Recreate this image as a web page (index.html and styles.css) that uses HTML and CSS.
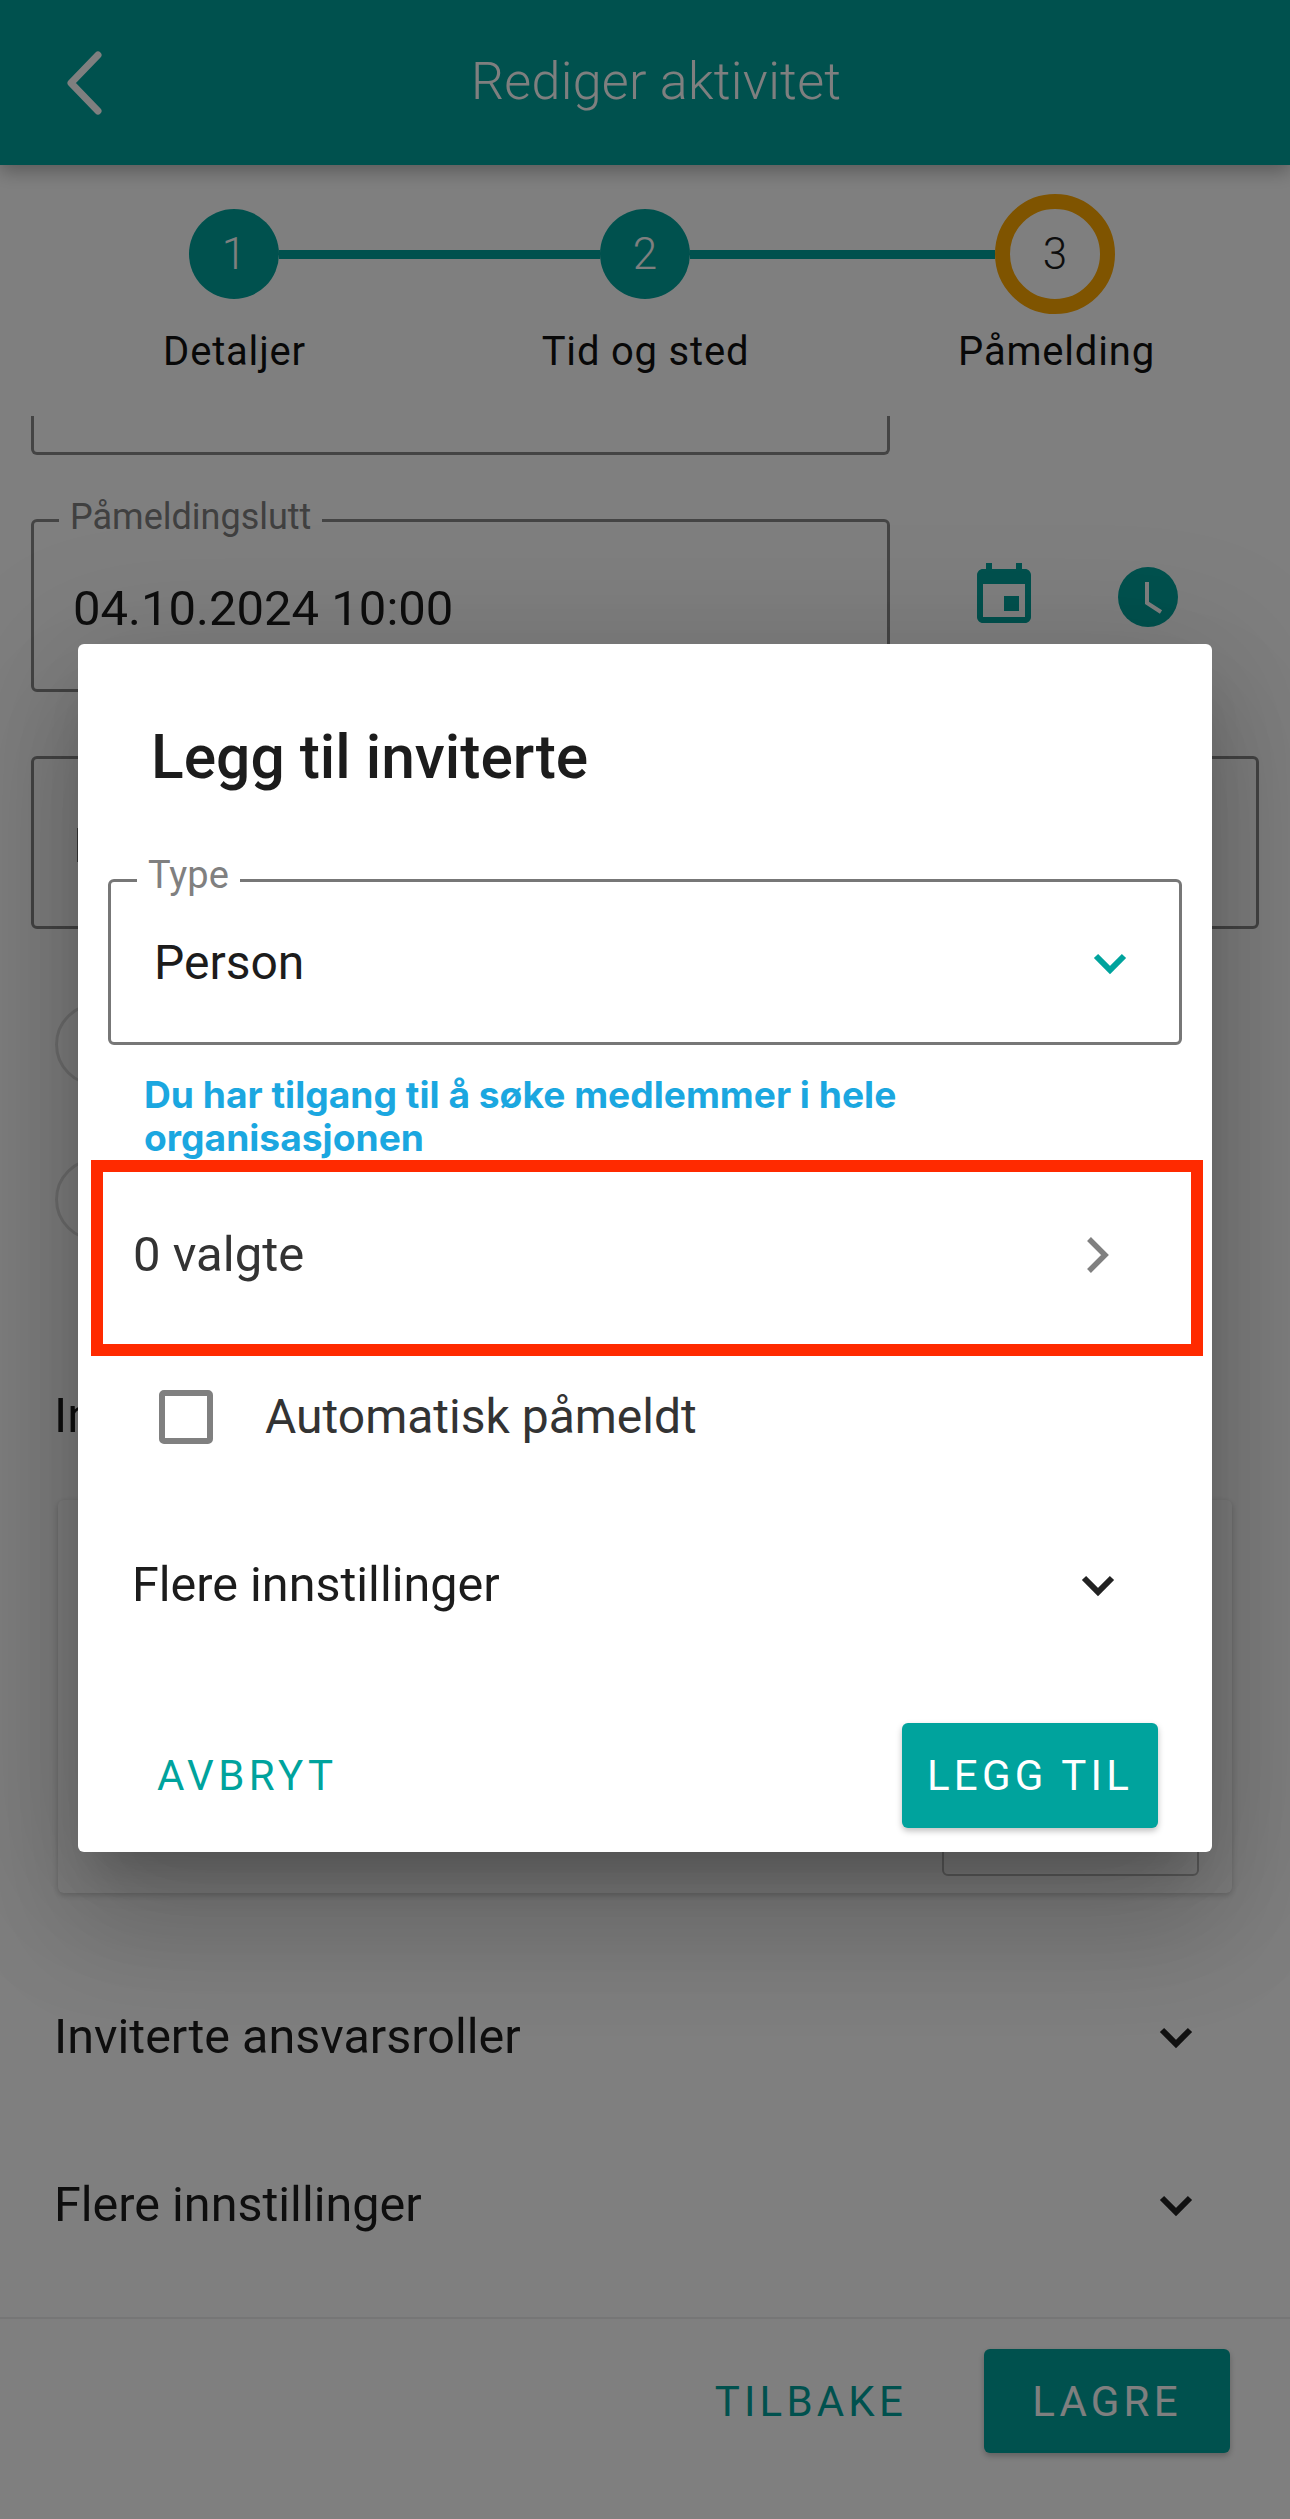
FILE: index.html
```html
<!DOCTYPE html>
<html lang="no">
<head>
<meta charset="utf-8">
<title>Rediger aktivitet</title>
<link rel="stylesheet" href="styles.css">
</head>
<body>
<div class="page">
  <header class="topbar">
    <svg class="back" width="44" height="72" viewBox="0 0 44 72"><polyline points="36,8 9,36 36,64"/></svg>
    <h1 class="topbar-title">Rediger aktivitet</h1>
  </header>

  <section class="stepper">
    <div class="track">
      <span class="dot">1</span><span class="link link-a"></span>
      <span class="dot">2</span><span class="link link-b"></span>
      <span class="dot dot-active">3</span>
    </div>
    <div class="labels">
      <span>Detaljer</span><span>Tid og sted</span><span>Påmelding</span>
    </div>
  </section>

  <main class="content">
    <div class="field-cut"></div>
    <div class="date-row">
      <div class="field field-date">
        <span class="legend">Påmeldingslutt</span>
        <span class="value">04.10.2024 10:00</span>
      </div>
      <svg class="ico-cal" width="72" height="72" viewBox="0 0 24 24"><path d="M17 12h-5v5h5v-5zM16 1v2H8V1H6v2H5c-1.11 0-1.99.9-1.99 2L3 19c0 1.1.89 2 2 2h14c1.1 0 2-.9 2-2V5c0-1.1-.9-2-2-2h-1V1h-2zm3 18H5V8h14v11z"/></svg>
      <svg class="ico-clock" width="60" height="60" viewBox="0 0 60 60"><circle cx="30" cy="30" r="30"/><polyline points="29,15 29,36 43,45"/></svg>
    </div>
    <div class="field field-wide"><span class="value">I</span></div>
    <div class="radios"><span class="radio"></span><span class="radio"></span></div>
    <div class="section-label">In</div>
    <div class="card"><div class="card-input"></div></div>
    <div class="accordion">
      <span>Inviterte ansvarsroller</span>
      <svg class="chev" width="36" height="24" viewBox="0 0 36 24"><polyline points="4,5 18,19 32,5"/></svg>
    </div>
    <div class="accordion accordion-last">
      <span>Flere innstillinger</span>
      <svg class="chev" width="36" height="24" viewBox="0 0 36 24"><polyline points="4,5 18,19 32,5"/></svg>
    </div>
  </main>

  <footer class="footer">
    <button class="btn-text btn-back">TILBAKE</button>
    <button class="btn-fill btn-save">LAGRE</button>
  </footer>

  <div class="overlay">
    <div class="dialog">
      <h2 class="dialog-title">Legg til inviterte</h2>
      <div class="select">
        <span class="legend legend-type">Type</span>
        <span class="select-value">Person</span>
        <svg class="chev chev-teal" width="36" height="24" viewBox="0 0 36 24"><polyline points="4,5 18,19 32,5"/></svg>
      </div>
      <p class="hint">Du har tilgang til å søke medlemmer i hele organisasjonen</p>
      <div class="picked">
        <span>0 valgte</span>
        <svg class="chev-right" width="26" height="38" viewBox="0 0 26 38"><polyline points="4,3 20,19 4,35"/></svg>
      </div>
      <label class="check-row"><span class="checkbox"></span><span>Automatisk påmeldt</span></label>
      <div class="more">
        <span>Flere innstillinger</span>
        <svg class="chev" width="36" height="24" viewBox="0 0 36 24"><polyline points="4,5 18,19 32,5"/></svg>
      </div>
      <div class="dialog-actions">
        <button class="btn-text btn-cancel">AVBRYT</button>
        <button class="btn-fill btn-add">LEGG TIL</button>
      </div>
    </div>
  </div>
</div>
</body>
</html>
```

FILE: styles.css
```css
* { box-sizing: border-box; }
html, body { margin: 0; padding: 0; }
body { font-family: Roboto, "Liberation Sans", sans-serif; color: #1c1c1c; background: #fff; }
button { font-family: inherit; border: 0; background: none; padding: 0; }

.page { position: relative; width: 1290px; height: 2519px; display: flex; flex-direction: column; overflow: hidden; background: #fff; }

.topbar { height: 165px; flex: none; background: #00a39d; display: flex; align-items: center; position: relative; z-index: 1; box-shadow: 0 6px 18px rgba(0,0,0,.3); }
.back { flex: none; margin: 0 0 0 62px; }
.back polyline { fill: none; stroke: #fff; stroke-width: 7; stroke-linecap: round; stroke-linejoin: round; }
.topbar-title { margin: -2px 0 0 365px; font-size: 52px; font-weight: 300; line-height: 60px; color: #fff; letter-spacing: .3px; }

.stepper { flex: none; height: 251px; padding-top: 29px; }
.track { display: flex; align-items: center; height: 120px; padding-left: 189px; }
.dot { flex: none; width: 90px; height: 90px; border-radius: 50%; background: #00a39d; color: #fff; font-size: 44px; font-weight: 300; display: flex; align-items: center; justify-content: center; }
.dot-active { width: 120px; height: 120px; background: #fff; border: 15px solid #ffa800; color: #1c1c1c; }
.link { height: 9px; background: #00a39d; flex: none; }
.link-a { width: 321px; }
.link-b { width: 305px; }
.labels { display: grid; grid-template-columns: repeat(3, 411px); padding-left: 29px; margin-top: 15px; font-size: 40px; line-height: 46px; text-align: center; letter-spacing: .8px; color: #111; }

.content { flex: 1; min-height: 0; overflow: hidden; }
.field-cut { width: 859px; height: 39px; margin-left: 31px; border: 3px solid #888; border-top: 0; border-radius: 0 0 6px 6px; }
.date-row { display: flex; align-items: flex-start; margin: 64px 0 0 31px; }
.field { position: relative; border: 3px solid #888; border-radius: 6px; display: flex; align-items: center; }
.field-date { width: 859px; height: 173px; flex: none; padding: 0 0 0 39px; }
.value { font-size: 49px; line-height: 56px; margin-top: 6px; color: #1c1c1c; }
.legend { position: absolute; top: -26px; left: 25px; padding: 0 11px; background: #fff; font-size: 36px; line-height: 42px; color: #808080; }
.ico-cal { flex: none; margin: 41px 0 0 78px; fill: #00a39d; }
.ico-clock { flex: none; margin: 48px 0 0 78px; }
.ico-clock circle { fill: #00a39d; }
.ico-clock polyline { fill: none; stroke: #fff; stroke-width: 4; }
.field-wide { width: 1228px; height: 173px; margin: 64px 0 0 31px; padding-left: 39px; }

.radios { display: flex; flex-direction: column; gap: 72px; margin: 74px 0 0 55px; }
.radio { width: 83px; height: 83px; border: 3px solid #ddd; border-radius: 50%; }
.section-label { margin: 147px 0 0 54px; font-size: 48.5px; line-height: 56px; }
.card { width: 1174px; height: 393px; margin: 56px 0 0 58px; border-radius: 6px; background: #fff; box-shadow: 0 2px 6px rgba(0,0,0,.2); display: flex; justify-content: flex-end; align-items: flex-end; padding: 0 33px 17px 0; }
.card-input { width: 257px; height: 70px; border: 2px solid #bbb; border-radius: 6px; }
.card + .accordion { margin-top: 60px; }
.accordion { height: 167px; display: flex; align-items: center; justify-content: space-between; padding: 0 96px 0 54px; font-size: 48.5px; line-height: 56px; color: #1c1c1c; }
.accordion-last { height: 170px; }
.chev { flex: none; }
.chev polyline { fill: none; stroke: #222; stroke-width: 6; }
.chev-teal polyline { stroke: #00a39d; }

.footer { flex: none; height: 202px; border-top: 2px solid #ececec; display: flex; align-items: flex-start; justify-content: flex-end; padding: 30px 60px 0 0; background: #fff; }
.btn-text { font-size: 42px; letter-spacing: 4.4px; font-weight: 400; color: #00a39d; }
.btn-fill { font-size: 42px; letter-spacing: 4.2px; font-weight: 400; color: #fff; background: #00a39d; border-radius: 6px; box-shadow: 0 3px 6px rgba(0,0,0,.25); }
.btn-back { height: 104px; margin-right: 77px; letter-spacing: 4.2px; }
.btn-save { width: 246px; height: 104px; }

.overlay { position: absolute; inset: 0; z-index: 2; background: rgba(0,0,0,.5); padding: 644px 78px 0; }
.dialog { width: 1134px; height: 1208px; background: #fff; border-radius: 6px; padding-top: 80px; box-shadow: 0 33px 45px -21px rgba(0,0,0,.2), 0 72px 114px 9px rgba(0,0,0,.14), 0 27px 138px 24px rgba(0,0,0,.12); }
.dialog-title { margin: 0 0 0 73px; font-size: 60.5px; line-height: 68px; font-weight: 500; color: #1c1c1c; }
.select { position: relative; width: 1074px; height: 166px; margin: 87px 0 0 30px; border: 3px solid #777; border-radius: 6px; display: flex; align-items: center; justify-content: space-between; padding: 0 51px 0 43px; }
.legend-type { left: 26px; top: -28px; font-size: 38px; }
.select-value { font-size: 48px; line-height: 56px; margin-top: 2px; color: #1c1c1c; }
.chev-teal { margin-top: 2px; }
.hint { margin: 28px 0 0 66px; width: 820px; font-family: Inter, Roboto, sans-serif; font-size: 37.2px; line-height: 43px; font-weight: 700; color: #1ba7e0; }
.picked { height: 196px; margin: 1px 9px 0 13px; border: 12px solid #ff2a00; display: flex; align-items: center; justify-content: space-between; padding: 0 80px 6px 30px; font-size: 49px; line-height: 56px; color: #333; }
.chev-right polyline { fill: none; stroke: #808080; stroke-width: 5.5; }
.check-row { height: 120px; display: flex; align-items: center; padding: 2px 0 0 81px; font-size: 48px; line-height: 56px; color: #333; }
.checkbox { width: 54px; height: 54px; flex: none; border: 6px solid #808080; border-radius: 5px; margin-right: 52px; }
.more { height: 218px; display: flex; align-items: center; justify-content: space-between; padding: 0 96px 0 54px; font-size: 48.5px; line-height: 56px; color: #1c1c1c; }
.dialog-actions { display: flex; justify-content: space-between; align-items: center; padding: 29px 54px 0 79px; }
.btn-add { width: 256px; height: 105px; }
```
